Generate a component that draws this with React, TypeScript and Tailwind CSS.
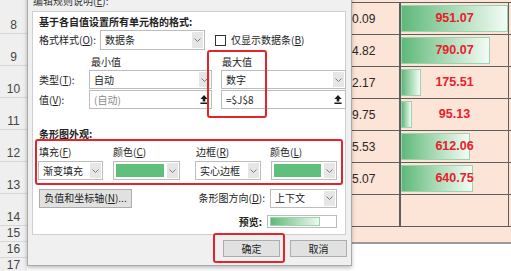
import React from "react";

const FONT = '"Noto Sans CJK SC", "Noto Sans", sans-serif';
const NUM = '"Liberation Sans", Arial, sans-serif';

function U({ c }: { c: string }) {
  return <span className="underline decoration-1 underline-offset-[1px]">{c}</span>;
}

function Chevron() {
  return (
    <svg width="7" height="4" viewBox="0 0 7 4" fill="none">
      <path d="M0.5 0.5L3.5 3.5L6.5 0.5" stroke="#7a7a7a" strokeWidth="1" />
    </svg>
  );
}

function DropBtn() {
  return (
    <span className="m-[1px] flex w-[11px] items-center justify-center bg-[#e6e6e6]">
      <Chevron />
    </span>
  );
}

function Select({ text, className }: { text: string; className: string }) {
  return (
    <div className={`flex items-stretch border border-[#bcbcbc] bg-white ${className}`}>
      <span className="flex flex-1 items-center pl-[4px] text-[#222]">{text}</span>
      <DropBtn />
    </div>
  );
}

function ColorSelect({ className }: { className: string }) {
  return (
    <div className={`flex items-stretch border border-[#bcbcbc] bg-white ${className}`}>
      <span className="m-[2px] flex-1 bg-[#5fbf7d]" />
      <DropBtn />
    </div>
  );
}

function CollapseIcon() {
  return (
    <svg width="8" height="9" viewBox="0 0 8 9">
      <path d="M4 0L7.6 4H5.3V6.4H2.7V4H0.4Z" fill="#1a1a1a" />
      <rect x="0.4" y="7.5" width="7.2" height="1.5" fill="#1a1a1a" />
    </svg>
  );
}

function RefInput({ text, gray }: { text: string; gray?: boolean }) {
  return (
    <div className="flex h-full items-center border border-[#bcbcbc] bg-white">
      <span className={`flex-1 pl-[4px] ${gray ? "text-[#8a8a8a]" : "text-[#222]"}`}>{text}</span>
      <span className="flex w-[12px] items-center justify-center pr-[2px]">
        <CollapseIcon />
      </span>
    </div>
  );
}

const data = [
  { n: "8", i: "0.09", v: 951.07 },
  { n: "9", i: "4.82", v: 790.07 },
  { n: "10", i: "2.17", v: 175.51 },
  { n: "11", i: "9.75", v: 95.13 },
  { n: "12", i: "5.53", v: 612.06 },
  { n: "13", i: "5.07", v: 640.75 },
  { n: "14", i: "", v: 0 },
];

function HeaderCell({ n, h }: { n: string; h: string }) {
  return (
    <div
      className={`flex w-[27px] shrink-0 items-end justify-center border-b border-[#d6d6d6] bg-[#efefef] pb-[1px] text-[12px] leading-[14px] text-[#444] ${h}`}
      style={{ fontFamily: NUM }}
    >
      {n}
    </div>
  );
}

export default function App() {
  return (
    <div className="relative h-[271px] w-[511px] overflow-hidden bg-white" style={{ fontFamily: FONT }}>
      {/* spreadsheet background */}
      <div className="flex flex-col">
        <div className="flex h-[2px]">
          <div className="w-[27px] shrink-0 bg-[#efefef]" />
          <div className="flex-1 bg-[#fce4d6]" />
        </div>
        {data.map((r) => (
          <div key={r.n} className="flex h-[32px]">
            <HeaderCell n={r.n} h="h-[32px]" />
            <div className="w-[325px] shrink-0 bg-[#fce4d6]" />
            <div
              className="flex w-[47px] shrink-0 items-center border-t border-[#5e5e5e] bg-[#fce4d6] text-[12px] text-[#262626]"
              style={{ fontFamily: NUM }}
            >
              {r.i}
            </div>
            <div className="relative flex w-[110px] shrink-0 items-center justify-center border-t border-r border-l-2 border-[#5e5e5e] bg-[#fce4d6]">
              {r.v > 0 && (
                <div
                  className="absolute top-[2px] bottom-[2px] left-0 border border-[#9bd5ab] bg-linear-to-r from-[#5cb97a] to-[#f3fbf6]"
                  style={{ width: `${(r.v / 951.07) * 107}px` }}
                />
              )}
              {r.v > 0 && (
                <span
                  className="relative text-[12.5px] font-bold text-[#e8202a]"
                  style={{ fontFamily: NUM }}
                >
                  {r.v.toFixed(2)}
                </span>
              )}
            </div>
            <div className="flex-1 border-t border-[#5e5e5e] bg-[#fce4d6]" />
          </div>
        ))}
        <div className="flex h-[16px]">
          <HeaderCell n="15" h="h-[16px]" />
          <div className="flex-1 border-t border-[#5e5e5e] bg-[#fce4d6]" />
        </div>
        <div className="flex h-[16px]">
          <HeaderCell n="16" h="h-[16px]" />
          <div className="flex-1 border-t-2 border-[#9a9a9a] bg-white" />
        </div>
        <div className="flex h-[16px]">
          <HeaderCell n="17" h="h-[16px]" />
          <div className="flex-1 bg-white" />
        </div>
      </div>

      {/* dialog */}
      <div className="absolute top-[-6px] left-[27px] flex h-[272px] w-[325px] flex-col border-x border-b border-[#a9a9a9] bg-[#f0f0f0] pl-[4px] text-[10px] text-[#222] shadow-[0_2px_4px_rgba(0,0,0,0.25)]">
        <div className="pl-[1px] leading-[14px] text-[#333]">
          编辑规则说明(<U c="E" />):
        </div>
        <div className="mt-[3px] flex h-[224px] w-[314px] flex-col border border-[#cfcfcf] bg-white pr-[8px] pl-[6px] leading-[14px]">
          <div className="mt-[3px] font-bold">基于各自值设置所有单元格的格式:</div>

          <div className="mt-[1px] flex h-[20px] items-center">
            <span className="w-[61px] shrink-0">
              格式样式(<U c="O" />):
            </span>
            <Select text="数据条" className="h-[20px] w-[105px]" />
            <span className="ml-[10px] h-[11px] w-[11px] border border-[#333] bg-white" />
            <span className="ml-[5px]">
              仅显示数据条(<U c="B" />)
            </span>
          </div>

          <div className="grid h-[20px] grid-cols-[41px_123px_125px] items-end gap-x-[9px] pb-[1px]">
            <span />
            <span className="pl-[2px]">最小值</span>
            <span className="pl-[1px]">最大值</span>
          </div>

          <div className="grid h-[19px] grid-cols-[41px_123px_125px] items-stretch gap-x-[9px]">
            <span className="flex items-center">
              类型(<U c="T" />):
            </span>
            <Select text="自动" className="h-full" />
            <Select text="数字" className="h-full" />
          </div>

          <div className="mt-[1px] grid h-[19px] grid-cols-[41px_123px_125px] items-stretch gap-x-[9px]">
            <span className="flex items-center">
              值(<U c="V" />):
            </span>
            <RefInput text="(自动)" gray />
            <RefInput text="=$J$8" />
          </div>

          <div className="mt-[18px] font-bold">条形图外观:</div>

          <div className="mt-[4px] -ml-[1px] grid grid-cols-[75px_82px_76px_66px]">
            <span className="pl-[1px]">
              填充(<U c="F" />)
            </span>
            <span>
              颜色(<U c="C" />)
            </span>
            <span className="pl-[1px]">
              边框(<U c="R" />)
            </span>
            <span className="-ml-[1px]">
              颜色(<U c="L" />)
            </span>
          </div>

          <div className="mt-[2px] -ml-[1px] grid h-[19px] grid-cols-[75px_82px_76px_66px]">
            <Select text="渐变填充" className="h-full w-[65px]" />
            <ColorSelect className="h-full w-[67px]" />
            <Select text="实心边框" className="h-full w-[66px]" />
            <ColorSelect className="h-full w-[66px]" />
          </div>

          <div className="mt-[8px] flex h-[20px] items-center">
            <div className="flex h-[19px] w-[93px] items-center justify-center border border-[#adadad] bg-[#e1e1e1]">
              负值和坐标轴(<U c="N" />)...
            </div>
            <span className="flex-1" />
            <span>
              条形图方向(<U c="D" />):
            </span>
            <Select text="上下文" className="ml-[5px] h-[19px] w-[67px]" />
          </div>

          <div className="mt-[7px] flex h-[13px] items-center justify-end">
            <span className="font-bold">预览:</span>
            <div className="ml-[5px] flex h-[13px] w-[70px] items-center border border-[#bcbcbc] bg-white pl-[2px]">
              <div className="h-[9px] w-[50px] border border-[#9bd5ab] bg-linear-to-r from-[#5cb97a] to-[#eef9f1]" />
            </div>
          </div>
        </div>

        <div className="mt-[5px] flex justify-end gap-[10px] pr-[4px]">
          <div className="flex h-[17px] w-[57px] items-center justify-center border border-[#adadad] bg-[#e1e1e1]">
            确定
          </div>
          <div className="flex h-[17px] w-[57px] items-center justify-center border border-[#adadad] bg-[#e1e1e1]">
            取消
          </div>
        </div>
      </div>

      {/* red annotation boxes */}
      <div className="absolute top-[50px] left-[207px] h-[68px] w-[60px] rounded-[3px] border-2 border-[#e3252b]" />
      <div className="absolute top-[139px] left-[35px] h-[46px] w-[308px] rounded-[3px] border-2 border-[#e3252b]" />
      <div className="absolute top-[233px] left-[213px] h-[30px] w-[72px] rounded-[3px] border-2 border-[#e3252b]" />
    </div>
  );
}
